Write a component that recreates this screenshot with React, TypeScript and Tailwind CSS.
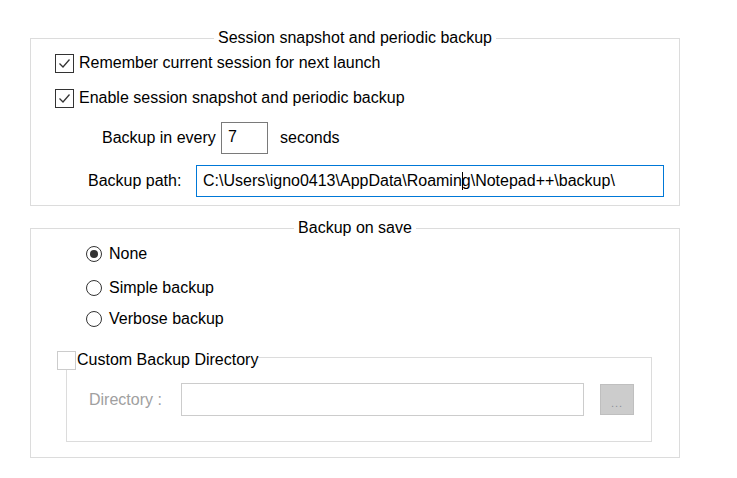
import React from "react";

function CheckBox({ checked, disabled }: { checked?: boolean; disabled?: boolean }) {
  return (
    <div
      className={
        "w-[19px] h-[19px] shrink-0 border bg-white flex items-center justify-center " +
        (disabled ? "border-[#cccccc]" : "border-[#333333]")
      }
    >
      {checked && (
        <svg width="13" height="13" viewBox="0 0 13 13">
          <path d="M1.5 6.5 L5 10 L11.5 2.5" fill="none" stroke="#333333" strokeWidth="1.3" />
        </svg>
      )}
    </div>
  );
}

function Radio({ checked }: { checked?: boolean }) {
  return (
    <div className="w-[16px] h-[16px] shrink-0 rounded-full border border-[#333333] bg-white flex items-center justify-center">
      {checked && <div className="w-[8px] h-[8px] rounded-full bg-[#333333]" />}
    </div>
  );
}

export default function App() {
  return (
    <div
      className="w-[737px] h-[478px] bg-white text-[16px] text-black pt-[28px] pl-[30px] overflow-hidden"
      style={{ fontFamily: '"Liberation Sans", Arial, sans-serif' }}
    >
      {/* Group 1 */}
      <fieldset className="w-[650px] border border-[#dcdcdc] pb-[8px]">
        <legend className="mx-auto px-[4px] leading-5">Session snapshot and periodic backup</legend>
        <div className="flex flex-col pt-[3px] pl-[24px]">
          <div className="h-[24px] flex items-center">
            <CheckBox checked />
            <span className="ml-[5px] leading-5">Remember current session for next launch</span>
          </div>
          <div className="h-[24px] flex items-center mt-[11px]">
            <CheckBox checked />
            <span className="ml-[5px] leading-5">Enable session snapshot and periodic backup</span>
          </div>
        </div>
        <div className="flex items-center mt-[12px] pl-[71px]">
          <span className="w-[119px] leading-5">Backup in every</span>
          <div className="w-[47px] h-[32px] border border-[#7a7a7a] pl-[6px] pt-[4px] leading-5">7</div>
          <span className="ml-[12px] leading-5">seconds</span>
        </div>
        <div className="flex items-center mt-[11px] pl-[57px]">
          <span className="w-[108px] leading-5">Backup path:</span>
          <div className="w-[468px] h-[32px] border border-[#0078d7] pl-[6px] flex items-center leading-5 whitespace-nowrap">
            <span>C:\Users\igno0413\AppData\Roamin</span>
            <span className="inline-block w-px h-[18px] bg-black -mr-px" />
            <span>g\Notepad++\backup\</span>
          </div>
        </div>
      </fieldset>

      {/* Group 2 */}
      <fieldset className="w-[650px] mt-[12px] border border-[#dcdcdc] pb-[15px]">
        <legend className="mx-auto px-[4px] leading-5">Backup on save</legend>
        <div className="flex flex-col pt-[4px] pl-[55px]">
          <div className="h-[24px] flex items-center">
            <Radio checked />
            <span className="ml-[7px] leading-5">None</span>
          </div>
          <div className="h-[24px] flex items-center mt-[10px]">
            <Radio />
            <span className="ml-[7px] leading-5">Simple backup</span>
          </div>
          <div className="h-[24px] flex items-center mt-[7px]">
            <Radio />
            <span className="ml-[7px] leading-5">Verbose backup</span>
          </div>
        </div>
        <fieldset className="ml-[35px] mt-[13px] w-[586px] border border-[#dcdcdc] pb-[25px]">
          <legend className="-ml-[10px] flex items-center pt-[7px]">
            <CheckBox disabled />
            <span className="ml-[1px] leading-[18px] -mt-[2px]">Custom Backup Directory</span>
          </legend>
          <div className="flex items-center pt-[13px] pl-[22px]">
            <span className="w-[92px] text-[#a0a0a0] leading-5">Directory :</span>
            <div className="w-[403px] h-[33px] border border-[#cccccc]" />
            <div className="ml-[16px] w-[34px] h-[31px] bg-[#cccccc] border border-[#bfbfbf] flex items-end justify-center pb-[5px]">
              <span className="text-[11px] leading-[11px] text-[#8a8f99] tracking-[1px]">...</span>
            </div>
          </div>
        </fieldset>
      </fieldset>
    </div>
  );
}
